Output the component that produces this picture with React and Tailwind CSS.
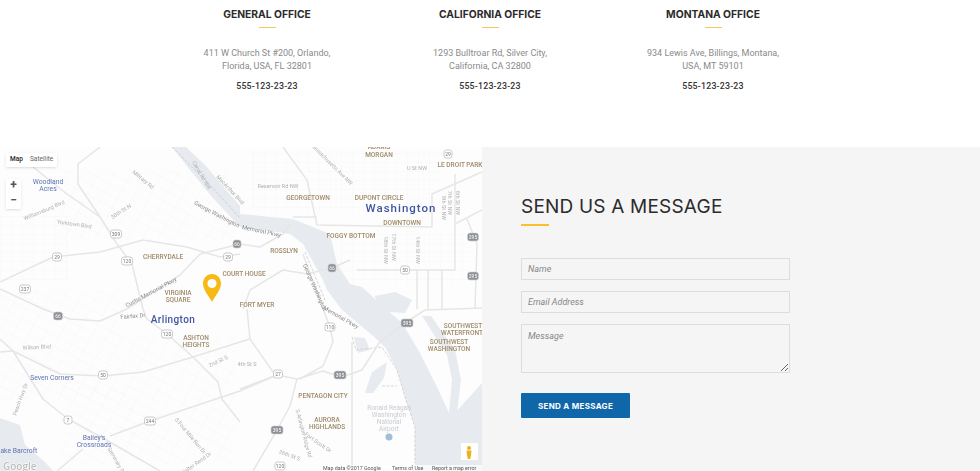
const offices = [
  { name: "GENERAL OFFICE", lines: ["411 W Church St #200, Orlando,", "Florida, USA, FL 32801"] },
  { name: "CALIFORNIA OFFICE", lines: ["1293 Bulltroar Rd, Silver City,", "California, CA 32800"] },
  { name: "MONTANA OFFICE", lines: ["934 Lewis Ave, Billings, Montana,", "USA, MT 59101"] },
];

const roads = [
  "M0 282L53 257L100 252L143 240L187 247L220 257L240 254",
  "M100 147L78 164L78 184L100 217L117 244L132 264L143 309L147 319L167 334L193 357L218 382L222 399L240 422",
  "M33 167L67 194L100 217",
  "M127 309L180 275L200 254L240 244L260 247L283 234L290 224",
  "M0 289L43 309L70 319L100 321L127 309",
  "M0 339L13 351L60 374L103 376L143 372L193 357L240 342L250 339",
  "M13 351L43 399L68 419L110 442L160 471",
  "M110 436L150 421L240 391L277 375",
  "M0 352L13 351",
  "M57 471L83 449",
  "M247 309L250 339L273 372",
  "M240 389L277 375L297 379L323 371L342 377L362 370L379 343L405 323L425 310L482 308",
  "M297 379L290 406L277 430L253 471",
  "M323 309L330 327L333 342L323 366L300 379",
  "M352 342L352 471",
  "M283 147L307 180L317 225L432 227L432 194L482 172",
  "M293 217L317 217",
  "M357 270L455 270L455 174",
  "M455 224L482 210",
  "M467 219L477 244L475 309",
  "M417 270L417 309M428 270L428 309M442 270L442 309",
  "M243 309L250 290L283 270L307 274L332 268L350 260",
  "M303 254L323 309",
];

const water = [
  // Potomac
  "M172 147L186 147L205 165L240 206L240 214L293 219L330 234L337 264L350 284L362 287L385 308L402 323L420 353L437 387L449 413L455 413L482 383L482 471L415 471L415 427L405 397L397 370L385 347L372 335L342 310L327 290L323 280L303 244L290 234L240 227L212 197L190 170Z",
  // Washington Channel
  "M422 316L431 316L455 350L461 380L457 413L449 413L452 380L447 355Z",
  // Tidal Basin and ponds
  "M375 296L395 292L412 300L405 313L390 312L378 308Z",
  "M354 337L365 338L370 350L358 353Z",
  "M365 393L372 372L387 362L384 378L373 393Z",
  "M0 418L20 425L25 445L45 462L53 471L0 471Z",
];

const greyPatches = [
  { d: "M0 215H70V280H0Z", p: "grid-a" },
  { d: "M0 290H125V400H0Z", p: "grid-b" },
  { d: "M130 335H235V465H130Z", p: "grid-b" },
  { d: "M60 170H235V240H60Z", p: "grid-b" },
  { d: "M250 150H440V212H250Z", p: "grid-a" },
  { d: "M340 230H470V285H340Z", p: "grid-a" },
  { d: "M60 385H135V465H60Z", p: "grid-b" },
];

const shields = [
  [116, 234, "309", 11], [57, 257, "29", 9], [127, 261, "120", 11], [25, 289, "237", 11], [228, 257, "29", 9],
  [237, 244, "66", 8, true], [58, 316, "66", 9, true], [167, 334, "120", 11], [103, 375, "50", 9], [68, 420, "7", 8],
  [150, 421, "244", 11], [332, 268, "66", 8, true], [405, 270, "50", 9], [473, 237, "295", 11, true], [473, 276, "295", 11, true],
  [448, 154, "29", 8], [330, 327, "110", 10], [278, 374, "27", 9], [340, 375, "395", 12, true], [407, 323, "395", 12, true],
  [277, 430, "395", 12, true], [280, 466, "120", 10],
];

const tanLabels = [
  [379, 146, "ADAMS"], [379, 154, "MORGAN"], [460, 164, "LE DROIT PARK"], [308, 197, "GEORGETOWN"], [379, 197, "DUPONT CIRCLE"],
  [402, 222, "DOWNTOWN"], [351, 235, "FOGGY BOTTOM"], [284, 250, "ROSSLYN"], [163, 256, "CHERRYDALE"], [244, 273, "COURT HOUSE"],
  [257, 304, "FORT MYER"], [178, 292, "VIRGINIA"], [178, 299, "SQUARE"], [196, 337, "ASHTON"], [196, 344, "HEIGHTS"],
  [463, 325, "SOUTHWEST"], [462, 332, "WATERFRONT"], [449, 341, "SOUTHWEST"], [449, 348, "WASHINGTON"], [323, 395, "PENTAGON CITY"],
  [327, 419, "AURORA"], [327, 426, "HIGHLANDS"],
];

const greyLabels = [
  [278, 188, "Reservoir Rd NW", 0], [74, 226, "Yorktown Blvd", 8], [45, 212, "Williamsburg Blvd", -23], [142, 181, "Military Rd", 40],
  [122, 213, "30th St N", -33], [200, 176, "Canal Rd NW", 60], [229, 191, "MacArthur Blvd", 47], [37, 349, "Wilson Blvd", -3],
  [219, 363, "2nd St S", -25], [189, 437, "S Four Mile Run Dr", 50], [197, 465, "Walter Reed Dr", -35], [22, 400, "Peach Hwy Dr", -70],
  [115, 462, "Seminary Rd", 60], [417, 170, "U St NW", 0], [456, 203, "6th St NW", 90], [448, 203, "7th St NW", 90], [442, 208, "9th St NW", 90],
  [384, 250, "18th St NW", 90], [392, 247, "17th St NW", 90], [416, 250, "14th St NW", 90], [330, 165, "Massachusetts Ave NW", 45],
  [302, 434, "S Arlington Ridge Rd", 75], [317, 444, "Fort Scott Dr", 35], [289, 457, "26th St S", 20], [247, 366, "4th St S", 0],
];

const roadLabels = [
  [216, 216, "George Washington", 28],
  [261, 233, "Memorial Pkwy", 12],
  [152, 294, "Custis Memorial Pkwy", -28],
  [313, 288, "George Washington", 66],
  [340, 319, "Memorial Pkwy", 30],
  [133, 318, "Fairfax Dr", -5],
];

const blueLabels = [
  [48, 184, "Woodland"], [48, 191, "Acres"], [52, 380, "Seven Corners"], [94, 440, "Bailey's"], [94, 447, "Crossroads"], [17, 453, "Lake Barcroft"],
];

function MapDrawing() {
  return (
    <svg viewBox="0 147 482 324" className="block w-[482px] h-[324px]" style={{ filter: "blur(0.3px)" }}>
      <defs>
        <pattern id="grid-a" width="11" height="9" patternUnits="userSpaceOnUse">
          <path d="M0 0H11M0 0V9" stroke="#f5f5f5" strokeWidth="0.8" fill="none" />
        </pattern>
        <pattern id="grid-b" width="14" height="10" patternUnits="userSpaceOnUse" patternTransform="rotate(28)">
          <path d="M0 0H14M0 0V10" stroke="#f5f5f5" strokeWidth="0.8" fill="none" />
        </pattern>
      </defs>
      <rect x="0" y="147" width="482" height="324" fill="#fdfdfd" />
      {greyPatches.map((g, i) => (
        <path key={i} d={g.d} fill={`url(#${g.p})`} />
      ))}
      {water.map((d, i) => (
        <path key={i} d={d} fill="#e7eaef" />
      ))}
      {/* limites do parque */}
      <path d="M352 337L356 350L382 347L397 370L405 397L415 427L415 463M382 386L397 386" stroke="#c4c4c4" strokeWidth="0.7" strokeDasharray="3 1.500" fill="none" />
      <path d="M172 147L210 185L240 218M305 252L325 300" stroke="#c4c4c4" strokeWidth="0.7" strokeDasharray="3 1.500" fill="none" />
      {roads.map((d, i) => (
        <path key={i} d={d} stroke="#e6e6e6" strokeWidth="1.500" fill="none" strokeLinejoin="round" />
      ))}
      {shields.map(([x, y, t, w, dark], i) => (
        <g key={i}>
          <rect x={x - w / 2} y={y - 4} width={w} height="8" rx="2.5" fill={dark ? "#8d9196" : "#fff"} stroke={dark ? "#d0d0d0" : "#aaa"} strokeWidth="0.6" />
          <text x={x} y={y + 2} textAnchor="middle" fontSize="5" fill={dark ? "#fff" : "#777"} fontFamily="Roboto, sans-serif">{t}</text>
        </g>
      ))}
      {greyLabels.map(([x, y, t, r], i) => (
        <text key={i} x={x} y={y} textAnchor="middle" fontSize="5.5" fill="#b0b0b0" fontFamily="Roboto, sans-serif" transform={`rotate(${r} ${x} ${y})`}>{t}</text>
      ))}
      {roadLabels.map(([x, y, t, r], i) => (
        <text key={i} x={x} y={y} textAnchor="middle" fontSize="5.8" fill="#8a8a8a" fontFamily="Roboto, sans-serif" transform={`rotate(${r} ${x} ${y})`}>{t}</text>
      ))}
      {tanLabels.map(([x, y, t], i) => (
        <text key={i} x={x} y={y + 2.500} textAnchor="middle" fontSize="6.5" fontWeight="500" fill="#a08a68" fontFamily="Roboto, sans-serif">{t}</text>
      ))}
      {blueLabels.map(([x, y, t], i) => (
        <text key={i} x={x} y={y} textAnchor="middle" fontSize="6.8" fill="#5f72b4" fontFamily="Roboto, sans-serif">{t}</text>
      ))}
      <text x="401" y="212" textAnchor="middle" fontSize="11.5" fontWeight="500" letterSpacing="1" fill="#3f55a0" fontFamily="Roboto, sans-serif">Washington</text>
      <text x="173" y="323" textAnchor="middle" fontSize="10" fontWeight="500" letterSpacing="0.4" fill="#3f55a0" fontFamily="Roboto, sans-serif">Arlington</text>
      <text x="389" y="410" textAnchor="middle" fontSize="6.500" fill="#c8cbd0" fontFamily="Roboto, sans-serif">Ronald Reagan</text>
      <text x="389" y="417" textAnchor="middle" fontSize="6.500" fill="#c8cbd0" fontFamily="Roboto, sans-serif">Washington</text>
      <text x="389" y="424" textAnchor="middle" fontSize="6.500" fill="#c8cbd0" fontFamily="Roboto, sans-serif">National</text>
      <text x="389" y="431" textAnchor="middle" fontSize="6.500" fill="#c8cbd0" fontFamily="Roboto, sans-serif">Airport</text>
      <circle cx="389" cy="437" r="3.500" fill="#a5bdd8" />
      {/* marcador */}
      <path d="M212 274C206.500 274 203 278.500 203 283.500C203 290 209 296 212 302C215 296 221 290 221 283.500C221 278.500 217.500 274 212 274Z" fill="#f6b916" />
      <circle cx="212" cy="283.500" r="4.500" fill="#fff" />
      {/* pegman */}
      <rect x="461" y="443" width="17" height="17" fill="#fff" />
      <circle cx="469" cy="448" r="2" fill="#eeb01c" />
      <path d="M466.500 450.500H471.500L471 455L470.200 459H467.800L467 455Z" fill="#eeb01c" />
      {/* google */}
      <text x="3" y="470" fontSize="10" fontWeight="600" fill="#bdbdbd" stroke="#fff" strokeWidth="1" paintOrder="stroke" fontFamily="Open Sans, sans-serif">Google</text>
      <rect x="321" y="465" width="161" height="6" fill="#fff" opacity="0.7" />
      <text x="323" y="470" fontSize="5.300" fill="#555" fontFamily="Roboto, sans-serif">Map data ©2017 Google</text>
      <text x="392" y="470" fontSize="5.300" fill="#555" fontFamily="Roboto, sans-serif">Terms of Use</text>
      <text x="432" y="470" fontSize="5.300" fill="#555" fontFamily="Roboto, sans-serif">Report a map error</text>
    </svg>
  );
}

export default function App() {
  return (
    <div className="w-[980px] h-[471px] overflow-hidden bg-white font-['Roboto',sans-serif]">
      {/* oficinas */}
      <section className="h-[147px] pt-[8px] flex justify-center">
        <div className="grid grid-cols-3 w-[669px]">
          {offices.map((o) => (
            <div key={o.name} className="flex flex-col items-center text-center">
              <h3 className="font-['Inter',sans-serif] font-bold text-[10.3px] leading-[13px] text-[#2b2b2b]">{o.name}</h3>
              <div className="w-[17px] h-px bg-[#f3c95f] mt-[6px]" />
              <p className="mt-[19px] text-[9px] leading-[13px] text-[#8a8a8a]">
                {o.lines[0]}
                <br />
                {o.lines[1]}
              </p>
              <p className="mt-[7px] text-[8.8px] leading-[13px] font-medium tracking-[0.2px] text-[#333]">555-123-23-23</p>
            </div>
          ))}
        </div>
      </section>

      <section className="flex h-[324px]">
        {/* mapa */}
        <div className="relative w-[482px] h-full overflow-hidden">
          <MapDrawing />
          <div className="absolute left-[6px] top-[6px] flex h-[14px] w-[51px] items-center bg-white text-[6.5px] shadow-sm">
            <span className="pl-[4px] w-[24px] font-medium text-[#222]">Map</span>
            <span className="text-[#666]">Satellite</span>
          </div>
          <div className="absolute left-[6px] top-[32px] flex w-[15px] h-[30px] flex-col items-center bg-white shadow-sm text-[#555]">
            <span className="h-[15px] text-[12px] leading-[13px] font-bold">+</span>
            <span className="h-[15px] text-[12px] leading-[13px] font-bold">−</span>
          </div>
        </div>

        {/* formulario */}
        <div className="flex-1 bg-[#f5f5f5] pl-[39px] pt-[48px]">
          <h2 className="font-['Inter',sans-serif] text-[19px] leading-[24px] tracking-[0.2px] text-[#2b2b2b]">SEND US A MESSAGE</h2>
          <div className="w-[28px] h-[2px] bg-[#fbc02d] mt-[5px]" />
          <form className="mt-[32px] flex flex-col w-[269px]">
            <input placeholder="Name" className="h-[22px] border border-[#ddd] bg-transparent px-[6px] text-[9px] italic placeholder:text-[#888] outline-none" />
            <input placeholder="Email Address" className="mt-[11px] h-[22px] border border-[#ddd] bg-transparent px-[6px] text-[9px] italic placeholder:text-[#888] outline-none" />
            <textarea placeholder="Message" className="mt-[11px] h-[49px] border border-[#ddd] bg-transparent px-[6px] py-[5px] text-[9px] italic placeholder:text-[#888] outline-none" />
            <button type="button" className="mt-[20px] w-[109px] h-[25px] rounded-[1px] bg-[#0f66a8] font-['Inter',sans-serif] font-bold text-[8px] tracking-[0.3px] text-white">
              SEND A MESSAGE
            </button>
          </form>
        </div>
      </section>
    </div>
  );
}
